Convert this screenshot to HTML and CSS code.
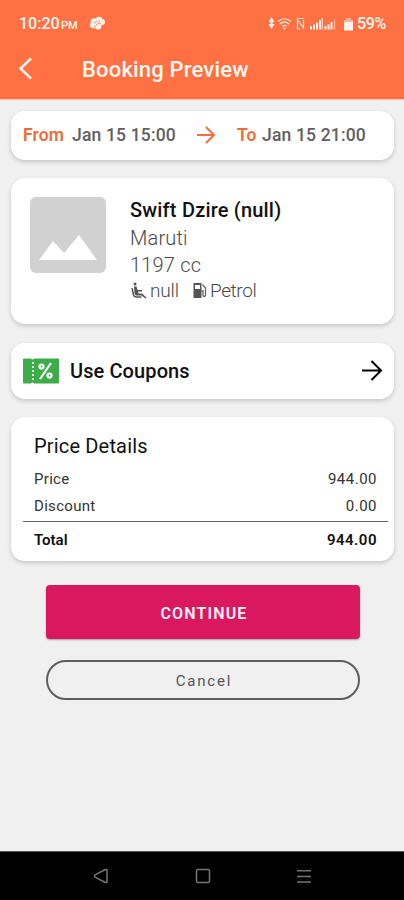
FILE: index.html
```
<!DOCTYPE html>
<html lang="en">
<head>
<meta charset="utf-8">
<title>Booking Preview</title>
<link rel="stylesheet" href="styles.css">
</head>
<body>
<header class="header">
  <div class="status">
    <span class="time">10:20</span><span class="pm">PM</span>
    <svg class="app" width="17" height="15" viewBox="0 0 17 15"><g fill="#fff3ec"><circle cx="5" cy="5.500" r="3.300"/><circle cx="10" cy="4" r="3.300"/><circle cx="4.200" cy="9" r="3.300"/><circle cx="9" cy="10" r="3.500"/><circle cx="13" cy="6" r="3"/></g><path d="M5 7l3-2M7 9l3-2 2 1M10 4l1 2M5 10l2 1" fill="none" stroke="#ff7143" stroke-width=".8"/></svg>
    <svg class="signals" width="89" height="16" viewBox="0 0 89 16"><g fill="#fff3ec"><path d="M4.500 1l3 5h-6zM4.500 13l3-5h-6zM3.500 6h2v2h-2z"/><g fill="none" stroke="#ffe3d5" stroke-width="1.200"><path d="M11 5.500q6.500-5.500 13 0M13 8q4.500-4 9 0M15.300 10.300q2.200-2 4.400 0"/><path d="M30.500 12.500V4l6 8V4M30 2.500h7M30 13h3"/></g><circle cx="17.500" cy="12.500" r="1"/><path d="M43 10h2v3.500h-2zM46 8.500h2v5h-2zM49 6.500h2v7h-2zM52 4h2v9.500h-2zM54.700 2h1v11.500h-1zM57.500 10h2v3.500h-2zM60.500 8.500h2v5h-2zM63.500 6h2v7.500h-2z"/><path d="M66.700 3h1.600v10.500h-1.600z" opacity=".45"/><path d="M77 6h9v8.500h-9z"/><path d="M79 2h5v2h2v2h-9V4h2z" opacity=".5"/></g></svg>
    <span class="battery">59%</span>
  </div>
  <div class="toolbar">
    <svg width="16" height="24" viewBox="0 0 16 24"><path d="M14 1.500L3.500 11.500l10.500 10" fill="none" stroke="#fff7f0" stroke-width="2.500"/></svg>
    <h1>Booking Preview</h1>
  </div>
</header>
<main class="content">
  <section class="card dates">
    <b class="from">From</b><span class="start">Jan 15 15:00</span>
    <svg width="20" height="20" viewBox="0 0 20 20"><path d="M1 10h17M10 2l8 8-8 8" fill="none" stroke="#f96d3c" stroke-width="2"/></svg>
    <b class="to">To</b><span class="end">Jan 15 21:00</span>
  </section>
  <section class="card car">
    <svg class="photo" width="76" height="76" viewBox="0 0 76 76"><rect width="76" height="76" rx="6" fill="#d1d1d1"/><path d="M9 63l14-19 11 12 15-18 18 25z" fill="#fff"/></svg>
    <div class="info">
      <h2>Swift Dzire (null)</h2>
      <p class="maker">Maruti</p>
      <p class="engine">1197 cc</p>
      <div class="specs">
        <svg width="18" height="18" viewBox="0 0 18 18"><circle cx="5" cy="2" r="1.500" fill="#555"/><path d="M4 4.500h2.500l1 3.500H12v1.500H8l.5 2H12l4.500 4-1 1-4-3H6.500q-1.500 0-2-2z" fill="#555"/><path d="M2 6l1.500 7q.7 2 3 2h5" fill="none" stroke="#555" stroke-width="1.500"/></svg><span class="seats">null</span>
        <svg class="fuel" width="16" height="18" viewBox="0 0 16 18"><path fill-rule="evenodd" d="M1.500 1h8v15h-8zM3 3v4h5V3z" fill="#555"/><path d="M9.500 9h1.500v4.500q1.500 2 2.500 0V6l-3-3.500" fill="none" stroke="#666" stroke-width="1.300"/></svg><span class="petrol">Petrol</span>
      </div>
    </div>
  </section>
  <section class="card coupons">
    <svg width="36" height="26" viewBox="0 0 36 26"><path d="M1 .500h7q1.500 2 3 0h24q1 0 1 1v23q0 1-1 1H11q-1.500-2-3 0H1q-1 0-1-1v-23q0-1 1-1z" fill="#3ead49"/><path d="M10 4v20" stroke="#e5f5e6" stroke-width="2" stroke-dasharray="2 2"/><g fill="none" stroke="#fff" stroke-width="2.200"><path d="M28 5L17 21"/><circle cx="18.500" cy="8.500" r="2"/><circle cx="26.500" cy="17.500" r="2"/></g></svg>
    <h2>Use Coupons</h2>
    <svg class="go" width="22" height="22" viewBox="0 0 22 22"><path d="M1 10.500h19M10.500 1l9.500 9.500-9.500 9.500" fill="none" stroke="#000" stroke-width="2"/></svg>
  </section>
  <section class="card prices">
    <h2>Price Details</h2>
    <div class="row"><span class="price">Price</span><span class="amount">944.00</span></div>
    <div class="row"><span class="discount">Discount</span><span class="amount">0.00</span></div>
    <div class="row total"><span class="label">Total</span><span class="amount">944.00</span></div>
  </section>
  <button class="continue">CONTINUE</button>
  <button class="cancel">Cancel</button>
</main>
<nav class="nav">
  <svg width="18" height="18" viewBox="0 0 18 18"><path d="M15 2.500v13h-1.500L2.500 9.800V8.200l11-5.700z" stroke-linejoin="round"/></svg>
  <svg width="18" height="18" viewBox="0 0 18 18"><rect x="2.500" y="2.500" width="13" height="13" rx="1.500"/></svg>
  <svg width="18" height="18" viewBox="0 0 18 18"><path d="M2 3.700h14M2 9.500h14M2 15h14"/></svg>
</nav>
</body>
</html>
```
FILE: styles.css
```
* { box-sizing: border-box; margin: 0; padding: 0; }
body { width: 404px; height: 900px; display: flex; flex-direction: column; background: #f0f0f1; font-family: Roboto, sans-serif; color: #111; overflow: hidden; }
svg { display: block; flex: none; }
span, b, h1, h2 { white-space: nowrap; }
.header { height: 99px; background: #ff7143; color: #fff7f0; box-shadow: 0 1px 1px #ffcbb8; flex: none; }
.status { display: flex; align-items: center; height: 46px; padding: 1px 18px 0 19px; font-weight: 500; }
.time { font-size: 16px; width: 42px; }
.pm { font-size: 11px; padding-top: 3px; width: 28px; }
.signals { margin-left: auto; margin-right: 1px; }
.battery { font-size: 16px; width: 29px; letter-spacing: -.3px; }
.toolbar { display: flex; align-items: center; height: 46px; padding-left: 17px; }
.toolbar h1 { margin-left: 49px; padding-top: 1px; font-size: 22px; font-weight: 500; line-height: 28px; letter-spacing: .18px; }
.content { flex: 1; padding: 12px 10px 0 11px; display: flex; flex-direction: column; }
.card { background: #fff; border-radius: 14px; box-shadow: 0 2px 4px #0000002e; }
.dates { height: 49px; display: flex; align-items: center; padding: 0 0 1px 12px; font-size: 17.5px; letter-spacing: .17px; }
.dates b { color: #f26a38; font-weight: 600; }
.dates span { color: #606060; font-weight: 500; }
.from { width: 49px; }
.start { width: 124px; }
.dates svg { margin-right: 21px; }
.to { width: 25px; }
.car { margin-top: 18px; height: 146px; display: flex; padding: 19px 19px 0; }
.info { margin-left: 24px; font-size: 20px; color: #484848; }
.info h2 { font-size: 20px; line-height: 27px; font-weight: 500; color: #111; letter-spacing: .19px; }
.info p { line-height: 28px; font-weight: 300; letter-spacing: .18px; }
.info .engine { line-height: 27px; }
.specs { display: flex; align-items: center; height: 23px; font-size: 19px; font-weight: 300; letter-spacing: -.15px; }
.seats { width: 42px; margin-left: 2px; }
.petrol { margin-left: 2px; letter-spacing: -.4px; }
.coupons { margin-top: 19px; height: 56px; display: flex; align-items: center; padding: 0 11px 0 12px; }
.coupons h2 { margin-left: 11px; font-size: 20px; font-weight: 500; letter-spacing: .1px; }
.go { margin-left: auto; }
.prices { margin-top: 18px; height: 144px; padding: 16px 6px 0 12px; }
.prices h2 { margin-left: 11px; font-size: 20px; font-weight: 400; line-height: 26px; margin-bottom: 6px; letter-spacing: .17px; }
.row { display: flex; justify-content: space-between; align-items: center; height: 27px; padding: 0 11px; font-size: 15px; color: #333; letter-spacing: .3px; }
.amount { letter-spacing: .5px; }
.total { height: 36px; border-top: 1px solid #666; margin-top: 2px; font-weight: 600; color: #111; letter-spacing: 0; }
button { font-family: Roboto, sans-serif; width: 314px; margin-left: 34.500px; flex: none; }
.continue { margin-top: 24px; height: 54px; padding: 2px 0 0 3px; border: 0; border-radius: 4px; background: #d91860; color: #fff0f6; font-size: 16px; font-weight: 600; letter-spacing: 1.15px; box-shadow: 0 1px 2px #0005; }
.cancel { margin-top: 21px; height: 40px; padding: 1px 0 0 3px; border: 2px solid #5b5e5d; border-radius: 20px; background: transparent; color: #555; font-size: 15px; letter-spacing: 1.8px; }
.nav { height: 49px; background: #000; display: flex; justify-content: space-between; align-items: center; padding: 0 91px 0 92px; border-top: 1px solid #555; flex: none; }
.nav svg { fill: none; stroke: #747474; stroke-width: 1.500; }
```
